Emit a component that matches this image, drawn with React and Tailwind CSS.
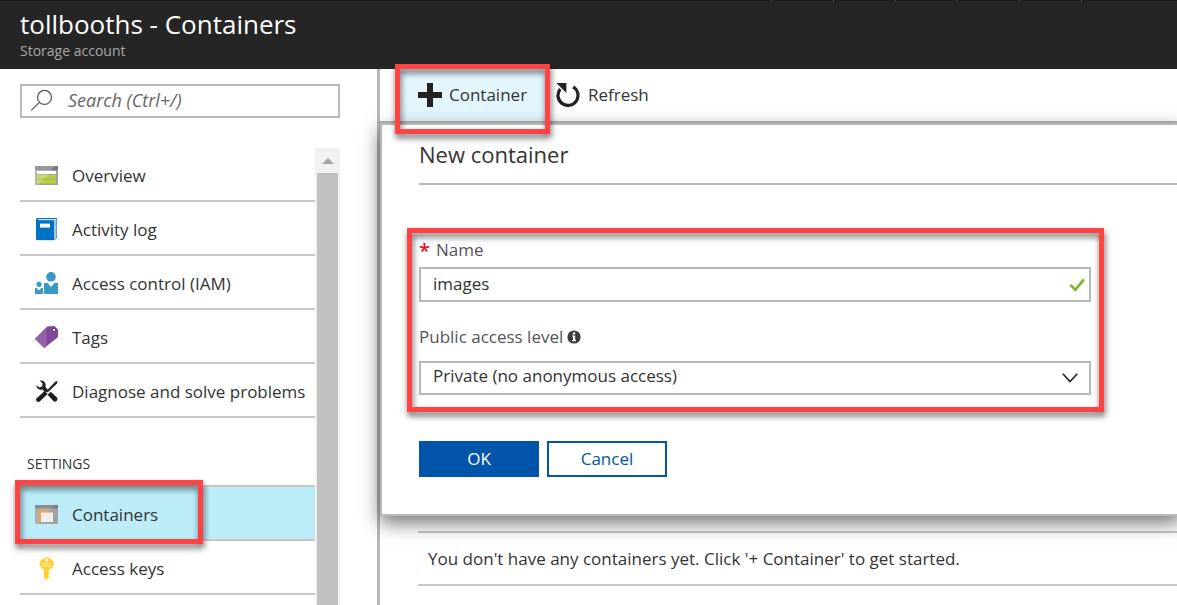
import React from 'react';

function OverviewIcon() {
  return (
    <svg viewBox="0 0 24 24" className="size-6" aria-hidden="true">
      <rect x="0" y="2" width="23" height="19" rx="0.6" fill="#a0a1a2" />
      <rect x="0" y="2" width="23" height="4" fill="#7a7a7a" />
      <rect x="2" y="7" width="19" height="3" fill="#fff" />
      <rect x="2" y="11" width="19" height="3.6" fill="#b8d432" />
      <rect x="2" y="15.6" width="19" height="3.8" fill="#b8d432" />
      <path d="M0 2h20L3 21H0z" fill="#fff" opacity="0.22" />
    </svg>
  );
}

function LogIcon() {
  return (
    <svg viewBox="0 0 24 24" className="size-6" aria-hidden="true">
      <path d="M2.5 0.5H22v20l-2.5 1.7H2.5z" fill="#59a4dc" />
      <path d="M3 1.2h18v19.2l-2 1.4H3z" fill="#b4c4d2" />
      <path d="M1 1.5Q1 0 2.5 0H22v1H3v1.2h16V22H2Q1 22 1 21z" fill="#0072c6" />
      <path d="M3.4 1.1H21v0.9H3.4z" fill="#dfeaf3" />
      <rect x="5" y="5.6" width="10" height="4" fill="#fff" />
    </svg>
  );
}

function PeopleIcon() {
  return (
    <svg viewBox="0 0 24 24" className="size-6" aria-hidden="true" fill="#3999c6">
      <circle cx="16" cy="4.8" r="4.8" />
      <path d="M9 11h3.5l3.5 4 3.5-4H23v11H9z" />
      <circle cx="4" cy="12.3" r="2.6" />
      <path d="M0 16h1.6L4 18.6 6.4 16H8v6H0z" />
    </svg>
  );
}

function TagIcon() {
  return (
    <svg viewBox="0 0 24 24" className="size-6" aria-hidden="true">
      <path d="M0 13 11.6 1.2Q12.3 0.3 13.5 0.3L19.5 0 23 3.4V10Q23 11 22.2 11.8L9.3 22z" fill="#804998" />
      <path d="M0 13 11.6 1.2V20L9.3 22z" fill="#9460a9" />
      <circle cx="19" cy="4" r="1.9" fill="#5c2d72" />
      <rect x="18" y="3" width="2" height="2" fill="#fff" />
    </svg>
  );
}

function ToolsIcon() {
  return (
    <svg viewBox="0 0 24 24" className="size-6" aria-hidden="true" fill="#1f1f1f">
      <path d="M4.6 0.6Q8.8-0.4 10.4 3.4 10.9 5 10.4 6.7L13 10 10.6 12.4 7.4 9.6Q2.5 10.6 1 5.2L4.6 7.4 7.4 6.3 7.5 3.2z" />
      <path d="M20.4 1.4 22.4 1 22 3.4 12.6 12.6 11.2 11.2z" />
      <path d="M9.6 11 12.6 14 4.8 21.6Q3 22.6 1.6 21.2 0.4 19.7 1.6 18.3z" />
      <path d="M12.6 14.8 15.8 11.8 22.2 17.7Q23 19.6 21.7 21 20 22.2 18.6 21.2z" />
    </svg>
  );
}

function ContainersIcon() {
  return (
    <svg viewBox="0 0 24 24" className="size-6" aria-hidden="true">
      <rect x="0" y="2" width="23" height="19" rx="0.6" fill="#a0a1a2" />
      <rect x="0" y="2" width="23" height="3.4" fill="#7a7a7a" />
      <path d="M0 2h20L3 21H0z" fill="#fff" opacity="0.15" />
      <path d="M4 7h4.5l1.2 1.4H18V19H4z" fill="#f8a14e" />
      <path d="M6 9.6h12V19H6z" fill="#efefef" />
    </svg>
  );
}

function KeyIcon() {
  return (
    <svg viewBox="0 0 24 24" className="size-6" aria-hidden="true">
      <path d="M11.7 0C8 1.2 4.6 3.7 4.6 6.5 4.6 9.5 6.4 11 9 13v8l2.7 1.8L14 20.6v-1.2L13 18l1.3-1.4v-1l-1.2-1.3L14.4 13C17 11 18.8 9.5 18.8 6.5 18.8 3.7 15.4 1.2 11.7 0z" fill="#ffd034" />
      <circle cx="11.7" cy="3" r="1.5" fill="#fff" />
      <path d="M7.2 6.9h9M7.2 9.1h9" stroke="#fff" strokeWidth="1" opacity="0.65" />
    </svg>
  );
}

function NavItem({ icon: Icon, label, active = false, marked = false }) {
  return (
    <li className={active ? 'relative border-y-2 border-[#c8c8c8] bg-[#bbecf8]' : 'border-b-2 border-[#c8c8c8]'}>
      <a href="#" className="flex h-[52px] items-center gap-[13px] pt-1 pl-[15px] text-[17px] whitespace-nowrap">
        <Icon />
        {label}
      </a>
      {marked && <Marker className="-top-[7px] -bottom-[5px] -left-[5px] w-[188px]" />}
    </li>
  );
}

function Marker({ className }) {
  return (
    <div
      className={`pointer-events-none absolute z-20 border-5 border-[#ff4343] drop-shadow-[1px_4px_3px_rgba(0,0,0,0.6)] ${className}`}
    />
  );
}

function Header() {
  return (
    <header className="h-[69px] bg-[#252525] text-white">
      <div className="flex h-px justify-end gap-[61px] bg-[#1c1c1c] pr-[95px]">
        <span className="w-px bg-[#555]" />
        <span className="w-px bg-[#555]" />
        <span className="w-px bg-[#555]" />
        <span className="w-px bg-[#555]" />
        <span className="w-px bg-[#555]" />
        <span className="w-px bg-[#555]" />
      </div>
      <div className="px-5 pt-[7px]">
        <h1 className="text-[26px] leading-[33px]">tollbooths - Containers</h1>
        <p className="text-[14px] leading-5 text-[#a8a8a8]">Storage account</p>
      </div>
    </header>
  );
}

function Sidebar() {
  return (
    <aside className="flex w-[377px] shrink-0 flex-col pt-[15px] pr-[37px] pl-5">
      <label className="flex h-[34px] shrink-0 items-center gap-[14px] border-2 border-[#b8b8b8] pl-2">
        <svg viewBox="0 0 24 24" className="size-6 shrink-0" fill="none" stroke="#555" strokeWidth="1.3" aria-hidden="true">
          <circle cx="14.5" cy="8.4" r="7" />
          <path d="M9.6 13.4 1.2 21.4" />
        </svg>
        <input
          type="search"
          aria-label="Search"
          placeholder="Search (Ctrl+/)"
          className="w-full min-w-0 pb-[2px] text-[18px] italic outline-none placeholder:text-[#666]"
        />
      </label>
      <div className="mt-[30px] flex min-h-0 flex-1">
        <nav className="min-w-0 flex-1 overflow-visible">
          <ul>
            <NavItem icon={OverviewIcon} label="Overview" />
            <NavItem icon={LogIcon} label="Activity log" />
            <NavItem icon={PeopleIcon} label="Access control (IAM)" />
            <NavItem icon={TagIcon} label="Tags" />
            <NavItem icon={ToolsIcon} label="Diagnose and solve problems" />
          </ul>
          <h2 className="pt-9 pb-[11px] pl-[7px] text-[14px] leading-5">SETTINGS</h2>
          <ul>
            <NavItem icon={ContainersIcon} label="Containers" active marked />
            <NavItem icon={KeyIcon} label="Access keys" />
          </ul>
        </nav>
        <div className="flex w-[25px] flex-col bg-[#f1f1f1]" aria-hidden="true">
          <div className="flex h-[25px] shrink-0 items-center justify-center">
            <svg viewBox="0 0 12 6" className="h-[6px] w-3">
              <path d="M6 0 12 6H0z" fill="#a3a3a3" />
            </svg>
          </div>
          <div className="mx-[2px] flex-1 bg-[#c1c1c1]" />
        </div>
      </div>
    </aside>
  );
}

function Toolbar() {
  return (
    <div className="flex h-[54px] border-b-2 border-[#b8b8b8] pl-5">
      <div className="relative">
        <button type="button" className="flex h-[52px] w-[145px] items-center gap-[7px] bg-[#e3f6fd] pl-[18px] text-[17px]">
          <svg viewBox="0 0 24 24" className="size-6" aria-hidden="true">
            <path d="M9 0h6v9h9v6h-9v9H9v-9H0V9h9z" fill="#222" />
          </svg>
          Container
        </button>
        <Marker className="-top-[5px] -right-[5px] -bottom-[13px] -left-[5px]" />
      </div>
      <button type="button" className="flex items-center gap-2 pl-[11px] text-[17px]">
        <svg viewBox="0 0 24 24" className="size-6" aria-hidden="true">
          <path d="M17.2 3.9A10 10 0 1 1 4.3 6" fill="none" stroke="#222" strokeWidth="3.2" />
          <path d="M0.4 0H10.4V10z" fill="#222" />
        </svg>
        Refresh
      </button>
    </div>
  );
}

function NewContainerPanel() {
  return (
    <form
      onSubmit={(event) => event.preventDefault()}
      className="relative z-10 -mr-1 border-2 border-[#b8b8b8] bg-white pb-[37px] pl-[37px] shadow-[0_7px_18px_rgba(0,0,0,0.55)]"
    >
      <h2 className="border-b-2 border-[#b8b8b8] pt-[15px] pb-[15px] text-[22px] leading-7">New container</h2>
      <div className="relative mt-[54px] mr-[88px] text-[17px]">
        <div className="flex h-7 items-start gap-[6px] leading-[22px] text-[#555]">
          <span className="text-[20px] leading-6 font-semibold text-[#e81123]">*</span>
          <label htmlFor="name">Name</label>
        </div>
        <div className="flex h-[35px] items-center border-2 border-[#b8b8b8] pr-1 pl-3">
          <input id="name" type="text" defaultValue="images" className="h-full min-w-0 flex-1 pb-[2px] outline-none" />
          <svg viewBox="0 0 16 14" className="h-[14px] w-4" fill="none" stroke="#76b82a" strokeWidth="2.6" aria-hidden="true">
            <path d="M1.4 6.8 6.4 11.8 14.8 1.4" />
          </svg>
        </div>
        <div className="flex items-center gap-1 pt-6 pb-[13px] leading-[22px] text-[#555]">
          <label htmlFor="access">Public access level</label>
          <svg viewBox="0 0 14 14" className="size-[14px]" aria-hidden="true">
            <circle cx="7" cy="7" r="6.6" fill="#3c3c3c" />
            <path d="M5.8 2.4h2.4v2H5.8zM5 5.4h3.2v4.6H9v1.2H5V10h1V6.6H5z" fill="#fff" />
          </svg>
        </div>
        <div className="relative">
          <select id="access" defaultValue="private" className="h-[34px] w-full appearance-none border-2 border-[#b8b8b8] bg-white px-3 pb-1 outline-none">
            <option value="private">Private (no anonymous access)</option>
            <option value="blob">Blob (anonymous read access for blobs only)</option>
            <option value="container">Container (anonymous read access for containers and blobs)</option>
          </select>
          <svg viewBox="0 0 16 10" className="pointer-events-none absolute top-3 right-[13px] h-[10px] w-4" fill="none" stroke="#222" strokeWidth="1.6" aria-hidden="true">
            <path d="M0.8 0.8 8 8.6 15.2 0.8" />
          </svg>
        </div>
        <Marker className="-top-[11px] -right-[13px] -bottom-[17px] -left-3" />
      </div>
      <div className="mt-[46px] flex gap-2 text-[17px]">
        <button type="submit" className="h-9 w-[120px] bg-[#0055aa] text-white">OK</button>
        <button type="button" className="h-9 w-[120px] border-2 border-[#0055aa] text-[#0055aa]">Cancel</button>
      </div>
    </form>
  );
}

export default function App() {
  return (
    <div className="flex h-screen flex-col overflow-hidden bg-white font-['Open_Sans','Noto_Sans',sans-serif] font-normal text-[#333]">
      <Header />
      <div className="flex min-h-0 flex-1">
        <Sidebar />
        <main className="min-w-0 flex-1 border-l-3 border-[#b8b8b8]">
          <Toolbar />
          <NewContainerPanel />
          <p className="mt-[15px] ml-[38px] border-y-2 border-[#c8c8c8] py-[13px] pl-[10px] text-[17px] leading-[25px]">
            You don't have any containers yet. Click '+ Container' to get started.
          </p>
        </main>
      </div>
    </div>
  );
}
